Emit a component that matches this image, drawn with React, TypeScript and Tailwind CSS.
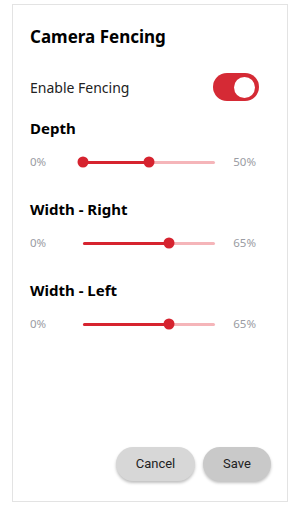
import { useState } from 'react'

type SliderProps = {
  label: string
  value: number
  start?: number
}

function RangeRow({ label, value, start }: SliderProps) {
  const from = start ?? 0
  return (
    <div className="flex flex-col">
      <h2 className="text-[15px] font-bold leading-5 text-black">{label}</h2>
      <div className="mt-[18px] flex h-[12px] items-center pr-[3px]">
        <span className="w-[53px] text-[11.5px] text-[#9a9ca3]">{from}%</span>
        <div className="relative h-[3px] w-[132px] rounded-full bg-[#f5b5b9]">
          <div
            className="absolute top-0 h-[3px] rounded-full bg-[#d6232f]"
            style={{ left: `${from}%`, width: `${value - from}%` }}
          />
          {start !== undefined && (
            <div
              className="absolute top-1/2 h-[11px] w-[11px] -translate-x-1/2 -translate-y-1/2 rounded-full bg-[#d6232f]"
              style={{ left: `${from}%` }}
            />
          )}
          <div
            className="absolute top-1/2 h-[11px] w-[11px] -translate-x-1/2 -translate-y-1/2 rounded-full bg-[#d6232f]"
            style={{ left: `${value}%` }}
          />
        </div>
        <span className="ml-auto text-[11.5px] text-[#9a9ca3]">{value}%</span>
      </div>
    </div>
  )
}

export default function App() {
  const [enabled, setEnabled] = useState(true)

  return (
    <div className="h-[516px] w-[300px] bg-white pt-[4px] font-['Noto_Sans',sans-serif]">
      <div className="mx-[12px] flex h-[498px] flex-col border border-[#e3e3e3] pl-[17px] pr-[28px]">
        {/* Header */}
        <h1 className="mt-[20px] text-[17px] font-bold leading-6 text-black">Camera Fencing</h1>

        {/* Toggle */}
        <div className="mt-[24px] flex items-center justify-between">
          <span className="text-[14px] text-[#222]">Enable Fencing</span>
          <button
            onClick={() => setEnabled(!enabled)}
            className={`flex h-[28px] w-[46px] items-center rounded-full px-[4px] ${
              enabled ? 'justify-end bg-[#d52a35]' : 'justify-start bg-gray-300'
            }`}
          >
            <span className="h-[21px] w-[21px] rounded-full bg-white" />
          </button>
        </div>

        {/* Sliders */}
        <div className="mt-[17px] flex flex-col gap-[31px]">
          <RangeRow label="Depth" start={0} value={50} />
          <RangeRow label="Width - Right" value={65} />
          <RangeRow label="Width - Left" value={65} />
        </div>

        {/* Actions */}
        <div className="mb-[20px] mt-auto flex justify-end gap-[8px] font-['Roboto',sans-serif] text-[13px] text-[#222]">
          <button className="h-[34px] w-[79px] rounded-full bg-[#d7d7d7] shadow-[0_2px_3px_rgba(0,0,0,0.25)]">
            Cancel
          </button>
          <button className="-mr-[12px] h-[34px] w-[68px] rounded-full bg-[#c9c9c9] shadow-[0_2px_3px_rgba(0,0,0,0.25)]">
            Save
          </button>
        </div>
      </div>
    </div>
  )
}
